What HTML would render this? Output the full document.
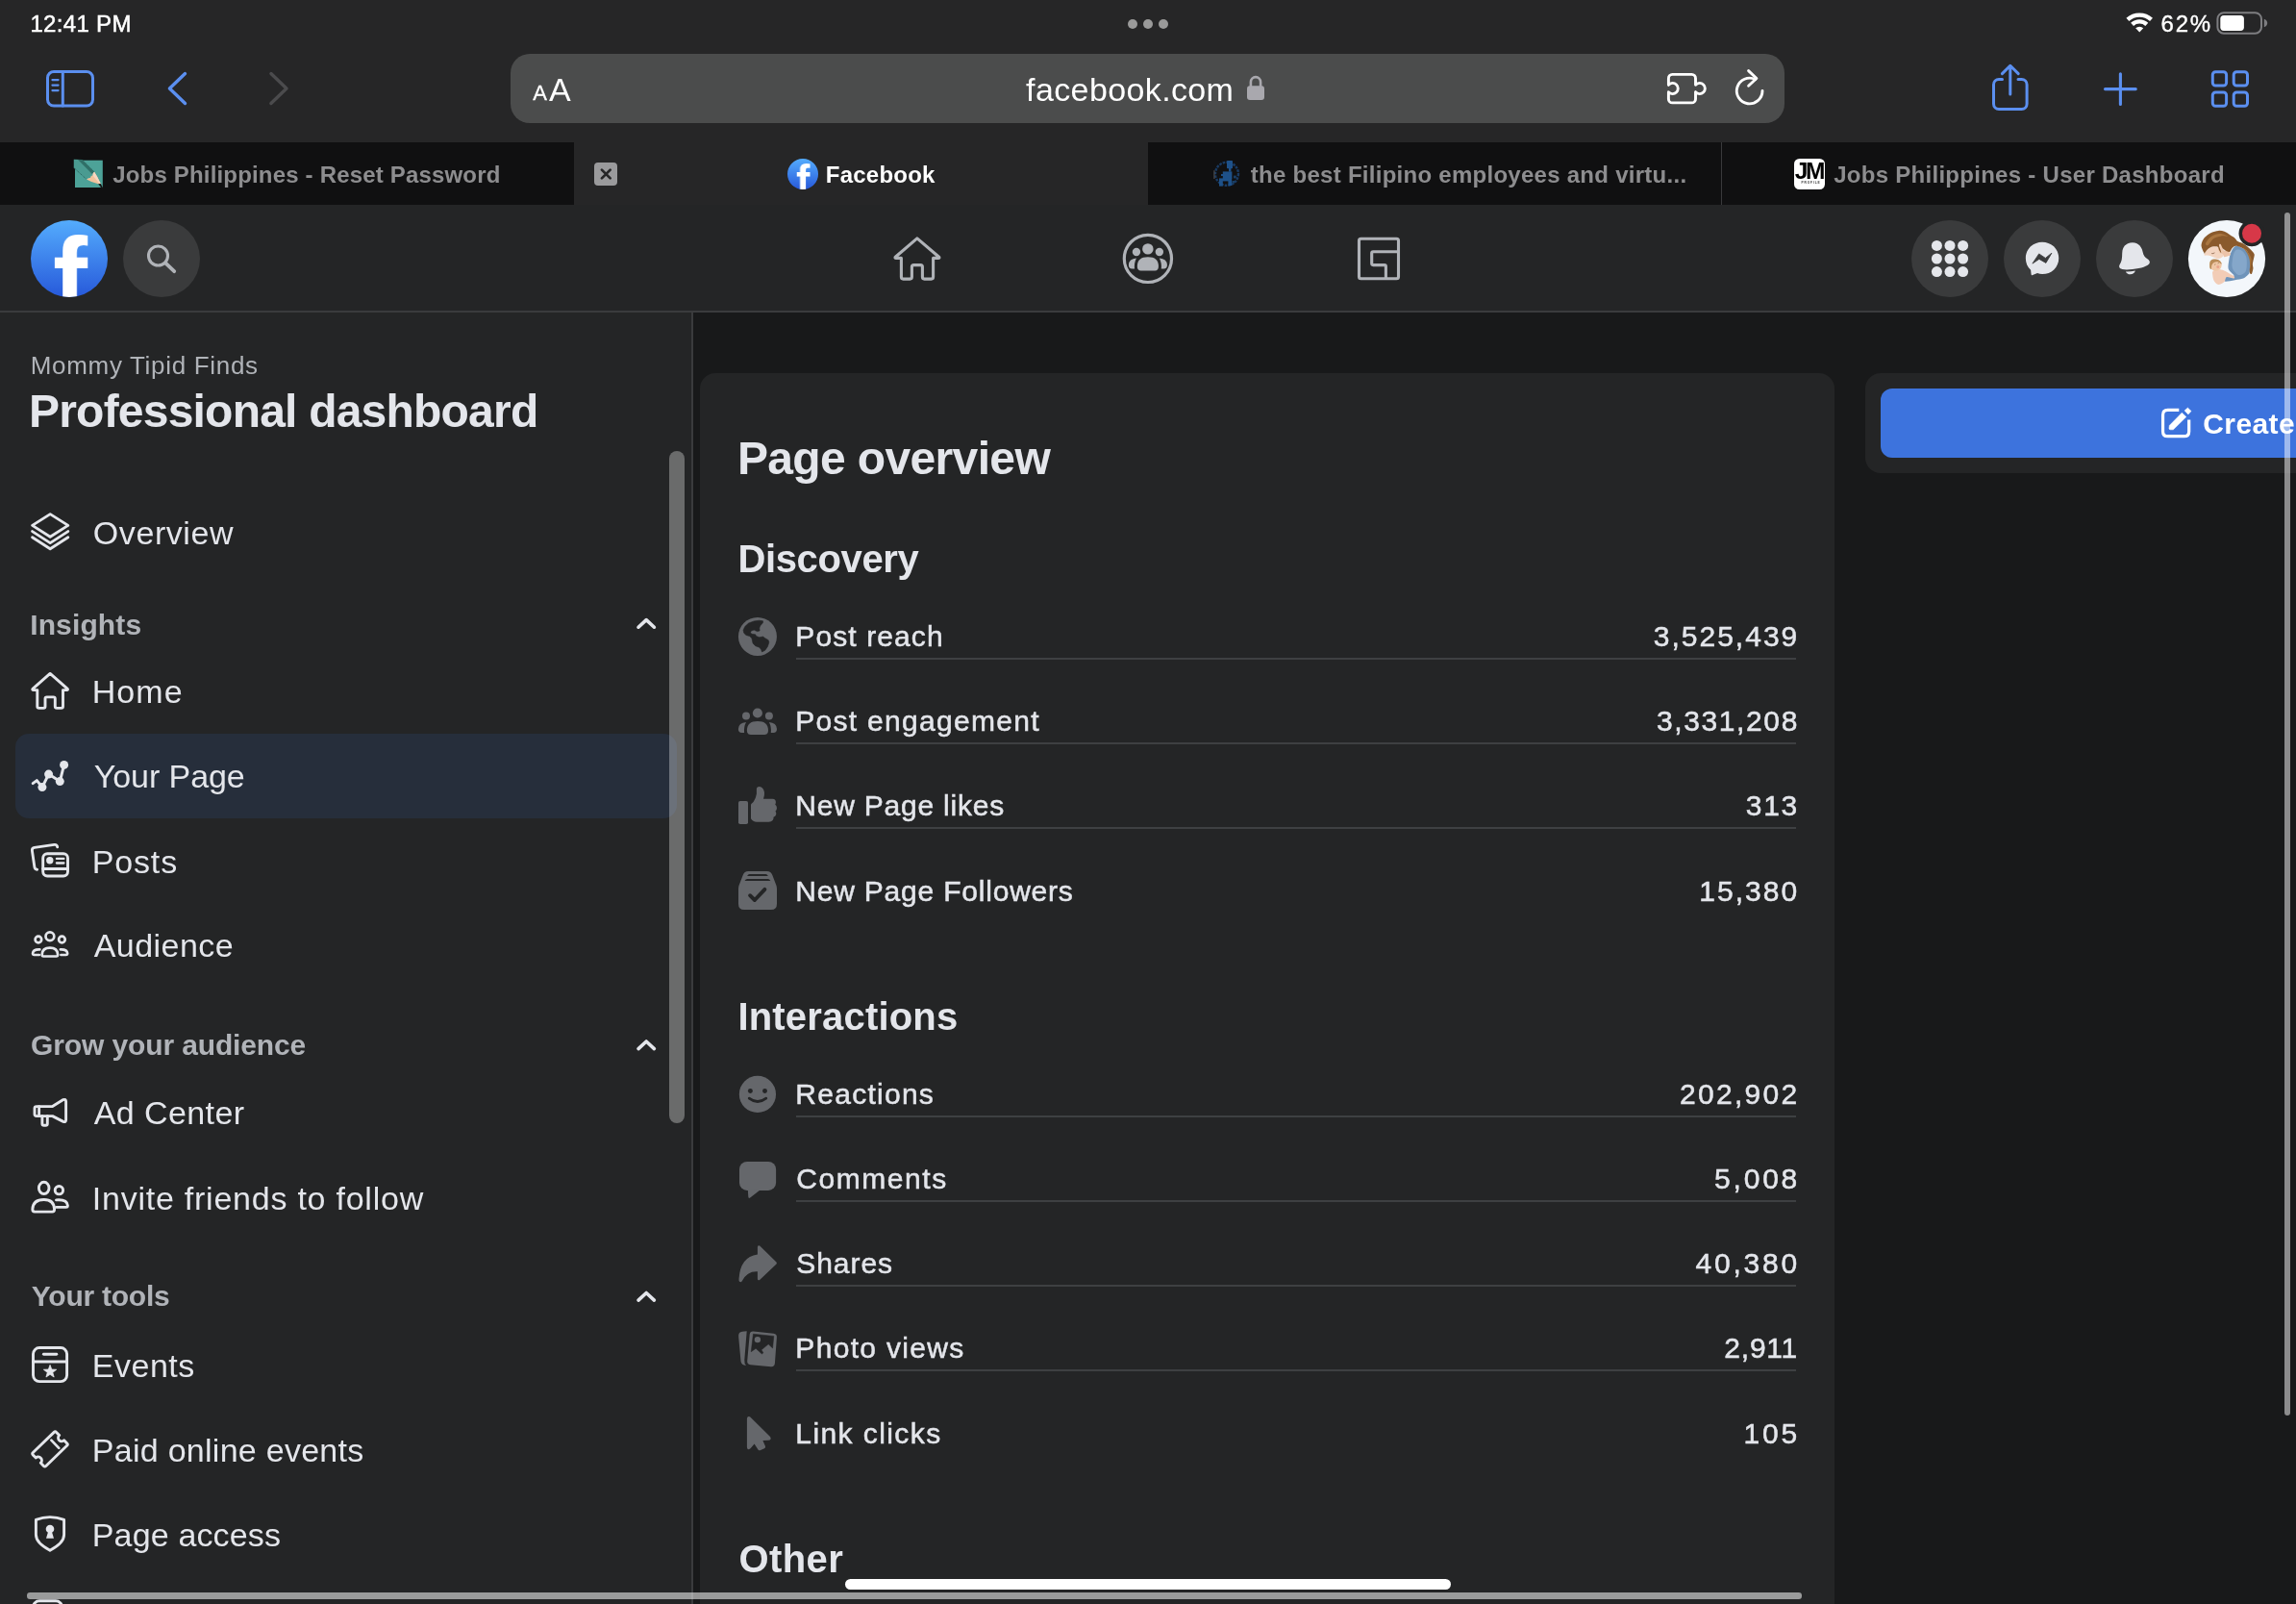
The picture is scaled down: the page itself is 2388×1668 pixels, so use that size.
<!DOCTYPE html>
<html lang="en"><head><meta charset="utf-8"><title>Facebook</title>
<style>
html,body{margin:0;padding:0;background:#18191a}
body{width:2388px;height:1668px;position:relative;font-family:"Liberation Sans",Arial,sans-serif;}
.b{position:absolute;display:block}
.t{position:absolute;white-space:nowrap;margin:0}
svg{overflow:visible}
#root{position:absolute;left:0;top:0;width:2388px;height:1668px;overflow:hidden;will-change:transform}
</style></head><body><div id="root">
<div class="b" style="left:0px;top:0px;width:2388px;height:148px;background:#262627;"></div>
<div class="b" style="left:0px;top:148px;width:2388px;height:65px;background:#101011;"></div>
<div class="b" style="left:597px;top:148px;width:597px;height:65px;background:#262627;"></div>
<div class="b" style="left:1790px;top:148px;width:1px;height:65px;background:#3a3a3c;"></div>
<div class="b" style="left:531px;top:56px;width:1325px;height:71.5px;background:#4b4c4c;border-radius:20px;"></div>
<div class="t" style="top:10.2px;font-size:24px;line-height:29px;color:#fff;letter-spacing:0.33px;-webkit-text-stroke:0.5px #fff;left:31.4px;">12:41 PM</div>
<div class="t" style="top:10.0px;font-size:24px;line-height:29px;color:#fff;letter-spacing:1.69px;-webkit-text-stroke:0.4px #fff;left:2247.6px;">62%</div>
<div class="t" style="top:84.2px;font-size:22px;line-height:26px;color:#fff;-webkit-text-stroke:0.3px #fff;left:554.2px;">A</div>
<div class="t" style="top:72.5px;font-size:34px;line-height:41px;color:#fff;left:571.1px;">A</div>
<div class="t" style="top:72.5px;font-size:34px;line-height:41px;color:#fff;letter-spacing:0.38px;left:1067.1px;">facebook.com</div>
<div class="t" style="top:167.0px;font-size:24px;line-height:29px;color:#8d8d8f;font-weight:700;letter-spacing:0.18px;left:117.2px;">Jobs Philippines - Reset Password</div>
<div class="t" style="top:167.0px;font-size:24px;line-height:29px;color:#fff;font-weight:700;letter-spacing:0.23px;left:858.8px;">Facebook</div>
<div class="t" style="top:167.0px;font-size:24px;line-height:29px;color:#8d8d8f;font-weight:700;letter-spacing:0.27px;left:1300.8px;">the best Filipino employees and virtu...</div>
<div class="t" style="top:167.0px;font-size:24px;line-height:29px;color:#8d8d8f;font-weight:700;letter-spacing:0.28px;left:1907.2px;">Jobs Philippines - User Dashboard</div>
<div class="b" style="left:0px;top:213px;width:2388px;height:112px;background:#242526;"></div>
<div class="b" style="left:0px;top:323px;width:2388px;height:2px;background:#3a3b3d;"></div>
<div class="b" style="left:0px;top:325px;width:719px;height:1343px;background:#242526;"></div>
<div class="b" style="left:719px;top:325px;width:2px;height:1343px;background:#3a3b3d;"></div>
<div class="t" style="top:364.9px;font-size:26px;line-height:31px;color:#b0b3b8;letter-spacing:0.69px;left:31.7px;">Mommy Tipid Finds</div>
<div class="t" style="top:398.6px;font-size:48px;line-height:58px;color:#e4e6eb;font-weight:700;letter-spacing:-0.79px;left:30.0px;">Professional dashboard</div>
<div class="b" style="left:16px;top:762.5px;width:688px;height:88px;background:#262e3b;border-radius:14px;"></div>
<div class="t" style="top:534.0px;font-size:34px;line-height:41px;color:#e4e6eb;letter-spacing:0.58px;left:96.8px;">Overview</div>
<div class="t" style="top:698.7px;font-size:34px;line-height:41px;color:#e4e6eb;letter-spacing:1.02px;left:95.8px;">Home</div>
<div class="t" style="top:787.3px;font-size:34px;line-height:41px;color:#e4e6eb;letter-spacing:-0.06px;left:97.7px;">Your Page</div>
<div class="t" style="top:875.5px;font-size:34px;line-height:41px;color:#e4e6eb;letter-spacing:0.83px;left:95.8px;">Posts</div>
<div class="t" style="top:963.2px;font-size:34px;line-height:41px;color:#e4e6eb;letter-spacing:0.46px;left:97.7px;">Audience</div>
<div class="t" style="top:1137.1px;font-size:34px;line-height:41px;color:#e4e6eb;letter-spacing:0.41px;left:97.7px;">Ad Center</div>
<div class="t" style="top:1225.7px;font-size:34px;line-height:41px;color:#e4e6eb;letter-spacing:0.76px;left:95.8px;">Invite friends to follow</div>
<div class="t" style="top:1399.5px;font-size:34px;line-height:41px;color:#e4e6eb;letter-spacing:0.50px;left:95.8px;">Events</div>
<div class="t" style="top:1487.5px;font-size:34px;line-height:41px;color:#e4e6eb;letter-spacing:0.27px;left:95.8px;">Paid online events</div>
<div class="t" style="top:1575.5px;font-size:34px;line-height:41px;color:#e4e6eb;letter-spacing:0.15px;left:95.8px;">Page access</div>
<div class="t" style="top:632.0px;font-size:30px;line-height:36px;color:#b0b3b8;font-weight:700;letter-spacing:0.13px;left:31.2px;">Insights</div>
<div class="t" style="top:1069.4px;font-size:30px;line-height:36px;color:#b0b3b8;font-weight:700;letter-spacing:-0.13px;left:32.1px;">Grow your audience</div>
<div class="t" style="top:1330.4px;font-size:30px;line-height:36px;color:#b0b3b8;font-weight:700;letter-spacing:-0.25px;left:32.8px;">Your tools</div>
<div class="b" style="left:696px;top:469px;width:16px;height:699px;background:rgba(255,255,255,0.32);border-radius:8px;"></div>
<div class="b" style="left:728px;top:388px;width:1180px;height:1400px;background:#242526;border-radius:16px;"></div>
<div class="t" style="top:447.7px;font-size:48px;line-height:58px;color:#e4e6eb;font-weight:700;letter-spacing:-0.64px;left:766.9px;">Page overview</div>
<div class="t" style="top:557.3px;font-size:40px;line-height:48px;color:#e4e6eb;font-weight:700;letter-spacing:-0.36px;left:767.4px;">Discovery</div>
<div class="t" style="top:1032.9px;font-size:40px;line-height:48px;color:#e4e6eb;font-weight:700;letter-spacing:0.19px;left:767.4px;">Interactions</div>
<div class="t" style="top:1596.9px;font-size:40px;line-height:48px;color:#e4e6eb;font-weight:700;letter-spacing:0.38px;left:768.6px;">Other</div>
<div class="t" style="top:644.1px;font-size:30px;line-height:36px;color:#e4e6eb;letter-spacing:1.10px;-webkit-text-stroke:0.5px #e4e6eb;left:827.3px;">Post reach</div>
<div class="t" style="top:644.1px;font-size:30px;line-height:36px;color:#e4e6eb;letter-spacing:2.00px;-webkit-text-stroke:0.5px #e4e6eb;left:1719.8px;">3,525,439</div>
<div class="b" style="left:828px;top:684px;width:1039.5px;height:2px;background:#3e4042;"></div>
<div class="t" style="top:732.2px;font-size:30px;line-height:36px;color:#e4e6eb;letter-spacing:1.29px;-webkit-text-stroke:0.5px #e4e6eb;left:827.3px;">Post engagement</div>
<div class="t" style="top:732.2px;font-size:30px;line-height:36px;color:#e4e6eb;letter-spacing:1.62px;-webkit-text-stroke:0.5px #e4e6eb;left:1722.9px;">3,331,208</div>
<div class="b" style="left:828px;top:772px;width:1039.5px;height:2px;background:#3e4042;"></div>
<div class="t" style="top:820.3px;font-size:30px;line-height:36px;color:#e4e6eb;letter-spacing:0.78px;-webkit-text-stroke:0.5px #e4e6eb;left:827.3px;">New Page likes</div>
<div class="t" style="top:820.3px;font-size:30px;line-height:36px;color:#e4e6eb;letter-spacing:1.77px;-webkit-text-stroke:0.5px #e4e6eb;left:1815.7px;">313</div>
<div class="b" style="left:828px;top:860px;width:1039.5px;height:2px;background:#3e4042;"></div>
<div class="t" style="top:908.6px;font-size:30px;line-height:36px;color:#e4e6eb;letter-spacing:0.79px;-webkit-text-stroke:0.5px #e4e6eb;left:827.3px;">New Page Followers</div>
<div class="t" style="top:908.6px;font-size:30px;line-height:36px;color:#e4e6eb;letter-spacing:2.05px;-webkit-text-stroke:0.5px #e4e6eb;left:1767.2px;">15,380</div>
<div class="t" style="top:1120.0px;font-size:30px;line-height:36px;color:#e4e6eb;letter-spacing:1.27px;-webkit-text-stroke:0.5px #e4e6eb;left:827.3px;">Reactions</div>
<div class="t" style="top:1120.0px;font-size:30px;line-height:36px;color:#e4e6eb;letter-spacing:2.32px;-webkit-text-stroke:0.5px #e4e6eb;left:1746.9px;">202,902</div>
<div class="b" style="left:828px;top:1160px;width:1039.5px;height:2px;background:#3e4042;"></div>
<div class="t" style="top:1208.4px;font-size:30px;line-height:36px;color:#e4e6eb;letter-spacing:1.57px;-webkit-text-stroke:0.5px #e4e6eb;left:828.2px;">Comments</div>
<div class="t" style="top:1208.4px;font-size:30px;line-height:36px;color:#e4e6eb;letter-spacing:2.78px;-webkit-text-stroke:0.5px #e4e6eb;left:1783.1px;">5,008</div>
<div class="b" style="left:828px;top:1248px;width:1039.5px;height:2px;background:#3e4042;"></div>
<div class="t" style="top:1296.4px;font-size:30px;line-height:36px;color:#e4e6eb;letter-spacing:0.97px;-webkit-text-stroke:0.5px #e4e6eb;left:828.2px;">Shares</div>
<div class="t" style="top:1296.4px;font-size:30px;line-height:36px;color:#e4e6eb;letter-spacing:2.83px;-webkit-text-stroke:0.5px #e4e6eb;left:1763.4px;">40,380</div>
<div class="b" style="left:828px;top:1336px;width:1039.5px;height:2px;background:#3e4042;"></div>
<div class="t" style="top:1384.4px;font-size:30px;line-height:36px;color:#e4e6eb;letter-spacing:1.32px;-webkit-text-stroke:0.5px #e4e6eb;left:827.3px;">Photo views</div>
<div class="t" style="top:1384.4px;font-size:30px;line-height:36px;color:#e4e6eb;letter-spacing:0.79px;-webkit-text-stroke:0.5px #e4e6eb;left:1793.3px;">2,911</div>
<div class="b" style="left:828px;top:1424px;width:1039.5px;height:2px;background:#3e4042;"></div>
<div class="t" style="top:1473.1px;font-size:30px;line-height:36px;color:#e4e6eb;letter-spacing:1.42px;-webkit-text-stroke:0.5px #e4e6eb;left:827.3px;">Link clicks</div>
<div class="t" style="top:1473.1px;font-size:30px;line-height:36px;color:#e4e6eb;letter-spacing:2.87px;-webkit-text-stroke:0.5px #e4e6eb;left:1813.5px;">105</div>
<div class="b" style="left:1940px;top:388px;width:500px;height:104px;background:#242526;border-radius:16px;"></div>
<div class="b" style="left:1956px;top:404px;width:500px;height:72px;background:#3d73dd;border-radius:12px;"></div>
<div class="t" style="top:423.1px;font-size:30px;line-height:36px;color:#fff;font-weight:700;letter-spacing:0.40px;left:2291.3px;">Create</div>
<svg class="b" style="left:0;top:0" width="2388" height="1668" viewBox="0 0 2388 1668"><g fill="none" stroke="#5b8ff0" stroke-linecap="round" stroke-linejoin="round"><rect x="49.5" y="74.5" width="47" height="35.6" rx="6.5" stroke-width="3"/><path d="M65.3,74.5V110" stroke-width="3"/><path d="M54.4,83.1H60.6M54.4,88.6H60.6M54.4,94.1H60.6" stroke-width="2.1"/><path d="M192.5,76.6L176.4,92L192.5,107.5" stroke-width="3.4"/><path d="M281.9,76.6L298,92L281.9,107.5" stroke="#4b4b4d" stroke-width="3.4"/><path d="M2082.5,82.5H2079a5.5,5.5 0 0 0 -5.5,5.5V108a5.5,5.5 0 0 0 5.5,5.5H2102.6a5.5,5.5 0 0 0 5.5,-5.5V88a5.5,5.5 0 0 0 -5.5,-5.5H2099" stroke-width="3"/><path d="M2090.8,98V68.6M2082.4,76.6L2090.8,68.3L2099.2,76.6" stroke-width="3"/><path d="M2189.5,92.6H2221.3M2205.4,76.8V108.5" stroke-width="3.1"/><rect x="2301.3" y="74.7" width="14.3" height="14.3" rx="3" stroke-width="3"/><rect x="2323.2" y="74.7" width="14.3" height="14.3" rx="3" stroke-width="3"/><rect x="2301.3" y="96" width="14.3" height="14.3" rx="3" stroke-width="3"/><rect x="2323.2" y="96" width="14.3" height="14.3" rx="3" stroke-width="3"/></g><g fill="none" stroke="#ffffff" stroke-width="2.9" stroke-linecap="round" stroke-linejoin="round"><path d="M1739.4,77.4H1759.5a4,4 0 0 1 4,4V88.35a5.6,5.6 0 1 1 0,7.3V102.9a4,4 0 0 1 -4,4H1739.4a4,4 0 0 1 -4,-4V95.65a5.6,5.6 0 1 0 0,-7.3V81.4a4,4 0 0 1 4,-4Z"/><path d="M1833,94.55A13.35,13.35 0 1 1 1825.6,82.6"/><path d="M1818.6,73.6L1826.9,81.5L1818.6,89.3"/></g><rect x="1297" y="89.3" width="18" height="14.7" rx="3" fill="#a9a8ae"/><path d="M1300.9,90.5V85.2a5.1,5.1 0 0 1 10.2,0V90.5" fill="none" stroke="#a9a8ae" stroke-width="2.6"/><g fill="none" stroke="#ffffff" stroke-width="4.3"><path d="M2212.9,20.4A18,18 0 0 1 2237.5,20.4"/><path d="M2217.6,25.4A11.2,11.2 0 0 1 2232.8,25.4"/></g><path d="M2225.2,33.6L2221.2,29.3A5.9,5.9 0 0 1 2229.2,29.3Z" fill="#ffffff"/><rect x="2306.4" y="13.2" width="45.6" height="21.5" rx="6.5" fill="none" stroke="#7d7d80" stroke-width="2"/><rect x="2309.3" y="16.1" width="24.6" height="15.8" rx="3.6" fill="#fff"/><path d="M2354.8,19.8c2.4,0.8 3.4,2.4 3.4,4.2s-1,3.4-3.4,4.2Z" fill="#7d7d80"/><circle cx="1178" cy="25" r="5" fill="#9a9a9a"/><circle cx="1194" cy="25" r="5" fill="#9a9a9a"/><circle cx="1210" cy="25" r="5" fill="#9a9a9a"/><rect x="618" y="169" width="24" height="24" rx="4" fill="#9a9a9c"/><path d="M625.9,176.6L634.7,185.4M634.7,176.6L625.9,185.4" stroke="#262627" stroke-width="2.7" stroke-linecap="round"/><rect x="78" y="166.7" width="28.8" height="28.3" fill="#4da298"/><path d="M76.75,165.7L85.3,166L98.1,178.8L90,186.5L76.75,174.4Z" fill="#4a9b91"/><path d="M81,166L85.3,166L98.1,178.8L95.9,180.9Z" fill="#2f6f67"/><path d="M76.75,174.4L90,186.5" stroke="#2a5f59" stroke-width="0.9" stroke-dasharray="1.2 0.8" fill="none"/><path d="M85.3,166L98.1,178.8" stroke="#2a5f59" stroke-width="0.7" stroke-dasharray="1.2 0.8" fill="none"/><path d="M98.1,178.8Q101.6,184 104.7,190.9L102.2,191.3Q95,189.6 90,186.5Q92,184.5 94,185Q94.5,182.5 96.5,182.6Q96.3,180 98.1,178.8Z" fill="#f0c29c"/><path d="M98.1,178.8Q101.6,184 104.7,190.9L103.4,191.1Q99.5,186 96.5,182.6Q96.3,180 98.1,178.8Z" fill="#f8d6c0"/><path d="M102.2,191.3L104.7,190.9L107.7,196.5L106.6,196.9Z" fill="#151515"/><circle cx="1276" cy="180.8" r="12" fill="none" stroke="#193a62" stroke-width="2.4" stroke-dasharray="2.6 1.1"/><g fill="#1e5189"><rect x="1276" y="167" width="6" height="8.2" rx="0.8"/><rect x="1278" y="175" width="2.4" height="3.6"/><rect x="1271.8" y="178.4" width="9.6" height="7.6"/><rect x="1270" y="181" width="2" height="2"/><rect x="1268" y="185.4" width="12" height="3"/><rect x="1268" y="188" width="3.8" height="5.6"/><rect x="1277.4" y="186" width="3.8" height="7"/></g><rect x="1283" y="182.6" width="2.8" height="2.8" fill="#1a3f66"/><rect x="1281.5" y="188" width="2.6" height="2.6" fill="#1a3f66"/><rect x="1262.3" y="177.2" width="1.2" height="8.8" fill="#4a4a4c"/><rect x="1866" y="165" width="32" height="32" rx="5.5" fill="#fff"/><circle cx="168" cy="269" r="40" fill="#3a3b3c"/><circle cx="2028" cy="269" r="40" fill="#3a3b3c"/><circle cx="2124" cy="269" r="40" fill="#3a3b3c"/><circle cx="2220" cy="269" r="40" fill="#3a3b3c"/><circle cx="164.5" cy="266" r="10" fill="none" stroke="#b0b3b8" stroke-width="3.1"/><path d="M172,273.3L181.2,282.2" stroke="#b0b3b8" stroke-width="3.8" stroke-linecap="round"/><path transform="translate(914,229)" d="M39.9,18.9L17.3,38.2Q16.5,39.4 18,39.4H23.4V59.1Q23.4,61.1 25.4,61.1H32.4Q34.4,61.1 34.4,59.1V48.6Q34.4,46.6 36.4,46.6H43.4Q45.4,46.6 45.4,48.6V59.1Q45.4,61.1 47.4,61.1H54.6Q56.6,61.1 56.6,59.1V39.4H61.9Q63.4,39.4 62.6,38.2Z" fill="none" stroke="#b0b3b8" stroke-width="3.1" stroke-linejoin="round"/><circle cx="1193.9" cy="268.9" r="24.6" fill="none" stroke="#b0b3b8" stroke-width="3.2"/><g transform="translate(1163.95,237.4)" fill="#b0b3b8"><circle cx="29.9" cy="21.5" r="5.7"/><circle cx="18" cy="24.6" r="4.2"/><circle cx="41.9" cy="24.6" r="4.2"/><path d="M22.7,44Q18.9,44 18.9,39.6Q18.9,29.9 29.95,29.9Q41,29.9 41,39.6Q41,44 37.2,44Z"/><path d="M18,31Q10.2,31.6 9.9,38Q9.9,42 13.6,42H16.1Q15.4,36 18,31Z"/><path d="M41.9,31Q49.7,31.6 50,38Q50,42 46.3,42H43.8Q44.5,36 41.9,31Z"/></g><g transform="translate(1394,229)" fill="none" stroke="#b0b3b8" stroke-width="3.1" stroke-linejoin="round"><rect x="19.5" y="19.3" width="41" height="41.4" rx="2"/><path d="M60.5,32.7H34.2Q32.7,32.7 32.7,34.2V45.1Q32.7,46.6 34.2,46.6H45.9Q47.4,46.6 47.4,48.1V60.7"/></g><circle cx="2014.4" cy="255.4" r="5.5" fill="#e4e6eb"/><circle cx="2028" cy="255.4" r="5.5" fill="#e4e6eb"/><circle cx="2041.6" cy="255.4" r="5.5" fill="#e4e6eb"/><circle cx="2014.4" cy="269" r="5.5" fill="#e4e6eb"/><circle cx="2028" cy="269" r="5.5" fill="#e4e6eb"/><circle cx="2041.6" cy="269" r="5.5" fill="#e4e6eb"/><circle cx="2014.4" cy="282.6" r="5.5" fill="#e4e6eb"/><circle cx="2028" cy="282.6" r="5.5" fill="#e4e6eb"/><circle cx="2041.6" cy="282.6" r="5.5" fill="#e4e6eb"/><g transform="translate(2084,229)"><path d="M40.05,22.7C30.4,22.7 22.85,29.9 22.85,39.4C22.85,44.4 24.8,48.7 28.1,51.8L28.6,56.2Q28.8,57.6 30.1,57L35,55Q37.4,56.1 40.05,56.1C49.7,56.1 57.25,48.9 57.25,39.4C57.25,29.9 49.7,22.7 40.05,22.7Z" fill="#e4e6eb"/><path d="M29.9,45.1L36.7,34.9L43.4,39.4L49.9,34.2L43.9,44.4L36.9,40.4Z" fill="#3a3b3c" stroke="#3a3b3c" stroke-width="0.8" stroke-linejoin="round"/></g><g transform="translate(2180,229)" fill="#e4e6eb"><path d="M27.2,34.4C27.2,27 32,23.2 37.9,23.2C44,23.2 47.5,27.5 48.6,33C49.3,37 51,38.5 53.5,40.2C56,41.8 56.3,43.5 55.4,45.2C54,47.5 47,50 38,51C31,51.8 26.5,51.3 25,50C23.6,48.8 24,47 25,45.4C26.5,43 27.2,40 27.2,34.4Z"/><path d="M30.9,53.4Q36,53.5 40.9,52.4Q39.5,56.2 35.7,56.2Q32.2,56.2 30.9,53.4Z"/></g><clipPath id="avc"><circle cx="46" cy="46" r="40"/></clipPath><g transform="translate(2270,223)"><circle cx="46" cy="46" r="40.1" fill="#f3f7fb"/><g clip-path="url(#avc)"><path d="M55.1,33.0C56.4,32.5 57.9,33.1 59.7,33.8C61.5,34.6 64.3,35.7 66.0,37.3C67.7,38.9 69.0,41.2 69.7,43.6C70.4,46.0 70.3,49.0 70.3,51.6C70.3,54.3 70.0,57.9 69.7,59.7C69.4,61.5 69.4,61.4 68.3,62.5C67.2,63.7 65.4,65.6 63.1,66.6C60.8,67.5 57.6,67.7 54.5,68.3C51.4,68.8 46.5,69.9 44.8,69.8C43.0,69.7 43.9,68.5 44.1,67.7C44.3,66.9 44.3,65.5 45.9,64.8C47.4,64.2 52.6,64.4 53.4,63.7C54.1,62.9 51.4,61.5 50.5,60.2C49.5,59.0 48.0,58.1 47.6,56.2C47.2,54.3 47.8,51.1 48.1,48.8C48.4,46.5 48.7,44.5 49.3,42.5C49.9,40.4 50.7,38.3 51.6,36.7C52.6,35.1 53.7,33.5 55.1,33.0Z" fill="#6f94ba"/><path d="M56.2,36.7C57.7,36.3 60.3,36.7 62.0,37.9C63.6,39.0 65.2,41.3 66.0,43.6C66.8,45.9 66.9,49.0 66.8,51.6C66.7,54.3 66.6,57.8 65.4,59.7C64.2,61.6 61.4,62.9 59.7,63.1C57.9,63.3 56.4,62.2 55.1,60.8C53.7,59.5 52.2,57.4 51.6,55.1C51.1,52.8 51.6,49.5 51.9,47.0C52.2,44.6 52.6,41.9 53.4,40.2C54.1,38.4 54.8,37.1 56.2,36.7Z" fill="#85a7ca"/><path d="M42.2,37.3C43.6,37.1 47.6,38.2 48.8,39.0C50.0,39.8 50.3,41.3 49.5,42.2C48.6,43.0 44.8,44.2 43.6,44.3C42.5,44.4 43.1,43.4 42.6,42.7C42.0,42.1 40.2,41.1 40.2,40.2C40.1,39.3 40.7,37.5 42.2,37.3Z" fill="#ecc3a8"/><path d="M23.2,40.2C23.9,39.0 25.5,36.7 27.0,35.6C28.4,34.4 30.5,33.6 32.1,33.3C33.8,33.0 35.7,33.2 36.7,33.8C37.7,34.5 37.6,36.2 38.2,37.3C38.7,38.3 39.4,39.3 40.2,40.2C40.9,41.0 42.7,41.6 42.7,42.5C42.7,43.3 41.2,44.4 40.2,45.0C39.2,45.6 37.7,46.0 36.7,46.0C35.8,46.1 35.4,45.7 34.4,45.3C33.5,45.0 32.3,44.3 31.0,43.9C29.6,43.4 27.7,42.8 26.4,42.6C25.0,42.4 23.4,43.0 22.8,42.6C22.3,42.2 22.5,41.3 23.2,40.2Z" fill="#f3d5c1"/><ellipse cx="39.9" cy="35.2" rx="2.8" ry="5.2" fill="#efc9ae"/><path d="M22.7,40.4C22.0,39.2 19.5,34.9 19.5,32.1C19.6,29.4 21.2,26.3 22.9,24.1C24.7,21.9 27.4,20.1 29.8,18.9C32.2,17.7 35.0,17.1 37.3,16.9C39.6,16.7 41.6,17.1 43.6,17.8C45.6,18.5 47.5,20.1 49.3,21.2C51.2,22.4 53.2,23.5 54.5,24.7C55.8,25.8 56.1,27.3 57.4,28.1C58.6,29.0 60.4,29.1 62.0,29.8C63.5,30.6 65.0,31.6 66.6,32.7C68.1,33.8 69.8,35.3 71.1,36.7C72.5,38.2 74.1,39.8 74.6,41.3C75.1,42.8 74.3,44.2 74.0,45.9C73.7,47.6 73.0,49.9 72.9,51.6C72.8,53.4 73.6,54.5 73.4,56.2C73.2,57.9 72.3,61.4 71.7,62.0C71.1,62.5 69.9,61.4 69.7,59.7C69.5,57.9 70.3,54.3 70.3,51.6C70.3,49.0 70.4,46.0 69.7,43.6C69.0,41.2 67.7,38.9 66.0,37.3C64.3,35.7 61.5,34.6 59.7,33.8C57.9,33.1 56.4,32.5 55.1,32.7C53.7,32.9 52.7,33.9 51.6,35.0C50.6,36.0 50.1,38.7 48.8,39.0C47.4,39.3 44.8,37.5 43.6,36.7C42.4,36.0 42.0,35.4 41.3,34.4C40.6,33.5 40.2,31.4 39.6,31.0C39.0,30.6 37.9,31.1 37.9,32.1C37.9,33.2 39.2,36.0 39.6,37.3C40.0,38.6 40.4,40.3 40.2,40.2C39.9,40.1 38.4,37.8 37.9,36.7C37.3,35.7 37.7,34.4 36.7,33.8C35.8,33.3 33.8,33.0 32.1,33.3C30.5,33.6 28.4,34.5 27.0,35.6C25.5,36.6 24.2,38.8 23.5,39.6C22.8,40.4 23.3,41.7 22.7,40.4Z" fill="#8a5a2c"/><path d="M24.1,29.8C24.7,28.3 27.3,24.6 29.8,22.9C32.3,21.3 36.1,20.1 39.0,20.1C41.9,20.1 46.9,22.6 47.0,22.9C47.2,23.3 42.6,22.0 40.2,22.4C37.7,22.8 34.4,23.6 32.1,25.2C29.8,26.9 27.7,31.4 26.4,32.1C25.1,32.9 23.5,31.4 24.1,29.8Z" fill="#a97640"/><path d="M63.1,34.4C63.4,34.4 67.4,38.1 68.8,40.2C70.3,42.3 71.4,44.7 71.7,47.0C72.1,49.4 70.8,52.4 70.9,54.5C70.9,56.6 72.1,59.6 72.0,59.7C71.9,59.8 70.7,57.2 70.3,55.1C69.9,53.0 70.2,49.5 69.7,47.0C69.2,44.6 68.2,42.3 67.1,40.2C66.0,38.1 62.8,34.4 63.1,34.4Z" fill="#a3703a"/><path d="M30.2,40.6Q32,41 33.4,39.8" stroke="#7a5236" stroke-width="0.7" fill="none"/><path d="M32.1,58.5C33.6,57.6 37.9,57.2 40.2,57.4C42.5,57.6 44.2,58.8 45.9,59.7C47.6,60.5 49.2,61.8 50.5,62.5C51.8,63.3 53.2,63.6 53.6,64.3C54.1,64.9 54.6,66.4 53.4,66.6C52.1,66.7 47.4,64.9 45.9,65.1C44.4,65.3 44.7,66.9 44.3,67.7C43.9,68.5 44.8,68.9 43.7,69.8C42.6,70.7 39.7,73.0 37.9,73.0C36.1,72.9 34.1,71.1 33.0,69.4C31.9,67.8 31.4,64.9 31.3,63.1C31.1,61.3 30.6,59.5 32.1,58.5Z" fill="#f2ccb6"/><circle cx="34.5" cy="52.6" r="6.2" fill="#f0c8a6"/><path d="M28.2,53.4C28.3,52.2 28.0,49.9 28.7,48.8C29.3,47.6 30.8,46.9 32.1,46.6C33.5,46.3 35.4,46.5 36.7,47.0C38.1,47.6 39.5,49.1 40.2,49.9C40.8,50.7 41.0,51.7 40.4,51.6C39.9,51.5 38.0,49.6 36.7,49.3C35.4,49.1 33.8,49.3 32.7,49.9C31.7,50.5 30.9,51.6 30.4,52.8C29.9,53.9 30.1,56.3 29.8,56.8C29.5,57.3 28.8,56.5 28.5,55.9C28.2,55.4 28.2,54.6 28.2,53.4Z" fill="#b98c58"/><circle cx="36.8" cy="54.4" r="1.5" fill="#eaa48c"/><path d="M33.2,52.2l1.2,-0.4M36.6,51l1.1,-0.5" stroke="#7a5236" stroke-width="0.6"/></g></g><circle cx="2342" cy="242.8" r="13.5" fill="#242526"/><circle cx="2342" cy="242.8" r="10" fill="#d73848"/><g fill="none" stroke="#e4e6eb" stroke-width="2.9" stroke-linecap="round" stroke-linejoin="round"><path d="M52.2,534.6L70.8,546.4L52.2,558.2L33.6,546.4Z"/><path d="M33.6,552.6L52.2,564.6L70.8,552.6"/><path d="M33.6,558.8L52.2,570.8L70.8,558.8"/></g><g fill="none" stroke="#e4e6eb" stroke-width="2.9" stroke-linecap="round" stroke-linejoin="round"><path d="M52.1,700.4L34,716.4Q33.2,717.6 34.8,717.6H38.8V734.6Q38.8,736.4 40.6,736.4H45.2Q47,736.4 47,734.6V726.6Q47,724.9 48.7,724.9H55.6Q57.3,724.9 57.3,726.6V734.6Q57.3,736.4 59.1,736.4H63.7Q65.5,736.4 65.5,734.6V717.6H69.5Q71,717.6 70.3,716.4Z"/></g><path d="M34.2,814.6L38.3,811.6L43.9,818.6L50.6,805.1L62.3,812.6L66.6,795.4" fill="none" stroke="#e4e6eb" stroke-width="3" stroke-linecap="round" stroke-linejoin="round"/><circle cx="43.9" cy="818.6" r="4.5" fill="#e4e6eb"/><circle cx="50.6" cy="805.1" r="4.5" fill="#e4e6eb"/><circle cx="62.3" cy="812.6" r="4.5" fill="#e4e6eb"/><circle cx="66.6" cy="795.4" r="4.5" fill="#e4e6eb"/><g fill="none" stroke="#e4e6eb" stroke-width="2.9" stroke-linecap="round" stroke-linejoin="round"><path d="M38.6,904.2Q36.2,904 35.9,901.6L33.4,884.6Q33,881.8 35.8,881.4L56.4,878.4Q59.2,878 59.7,880.8"/><rect x="44.7" y="887.8" width="25.8" height="23.2" rx="4.5"/><path d="M44.7,903.5H70.5"/></g><circle cx="51.8" cy="894.8" r="3.7" fill="#e4e6eb"/><path d="M58.9,892.9H66.4M58.9,897.5H66.4" stroke="#e4e6eb" stroke-width="2.3" stroke-linecap="round"/><g fill="none" stroke="#e4e6eb" stroke-width="2.7" stroke-linecap="round" stroke-linejoin="round"><circle cx="51.9" cy="973.7" r="4.4"/><circle cx="39.9" cy="977" r="3.3"/><circle cx="64.4" cy="977" r="3.3"/><path d="M45.2,994.5Q43.7,994.5 43.7,992.6Q44,985.6 51.9,985.6Q59.8,985.6 60.1,992.6Q60.1,994.5 58.6,994.5Z"/><path d="M41.4,987.3Q34.4,987 34.05,991.4Q34,993 35.6,993H40.8"/><path d="M62.8,987.3Q69.8,987 70.15,991.4Q70.2,993 68.6,993H63.4"/></g><g fill="none" stroke="#e4e6eb" stroke-width="2.9" stroke-linecap="round" stroke-linejoin="round"><path d="M38,1150.6H54.6L65.8,1143.6Q68.4,1142.6 68.6,1145.4V1164.6Q68.4,1167.4 65.8,1166.4L54.6,1160.6H38Q36,1160.6 36,1158.6V1152.6Q36,1150.6 38,1150.6Z"/><path d="M40.6,1150.6V1160.6"/><path d="M43.9,1160.6V1168.4Q43.9,1170.2 45.7,1170.2H47.5Q49.3,1170.2 49.3,1168.4V1160.6"/></g><g fill="none" stroke="#e4e6eb" stroke-width="2.9" stroke-linecap="round" stroke-linejoin="round"><ellipse cx="45.7" cy="1235.4" rx="5.3" ry="6.1"/><circle cx="61.4" cy="1237.7" r="4.2"/><path d="M36,1260.1Q33.8,1260.1 33.8,1257.6Q34.3,1247.5 45.7,1247.5Q56.2,1247.5 56.6,1257.6Q56.6,1260.1 54.4,1260.1Z"/><path d="M58.5,1247.9Q69.8,1247 70.4,1253.6Q70.4,1255.4 68.8,1255.4H58.6"/></g><g fill="none" stroke="#e4e6eb" stroke-width="2.9" stroke-linecap="round" stroke-linejoin="round"><rect x="34.5" y="1401.5" width="35.1" height="35.1" rx="6.5"/><path d="M34.5,1416H69.6"/><path d="M45.4,1408.3H58.8"/></g><polygon points="52.05,1419.40 53.75,1424.05 58.71,1424.24 54.81,1427.30 56.16,1432.06 52.05,1429.30 47.94,1432.06 49.29,1427.30 45.39,1424.24 50.35,1424.05" fill="#e4e6eb" stroke="#e4e6eb" stroke-width="0.8" stroke-linejoin="round"/><g fill="none" stroke="#e4e6eb" stroke-width="2.9" stroke-linecap="round" stroke-linejoin="round"><g transform="translate(52,1506.9) rotate(-44)"><path d="M-15.2,-9.7H15.2Q16.9,-9.7 16.9,-8V-3.6A3.6,3.6 0 0 0 16.9,3.6V8Q16.9,9.7 15.2,9.7H-15.2Q-16.9,9.7 -16.9,8V3.6A3.6,3.6 0 0 0 -16.9,-3.6V-8Q-16.9,-9.7 -15.2,-9.7Z"/><path d="M7.4,-5.7V5.7" stroke-width="2.7"/></g></g><g fill="none" stroke="#e4e6eb" stroke-width="2.9" stroke-linecap="round" stroke-linejoin="round"><path d="M52,1577.6Q59.5,1577.6 66.6,1580.4V1596Q66.6,1604.5 52,1612.2Q37.4,1604.5 37.4,1596V1580.4Q44.5,1577.6 52,1577.6Z"/></g><circle cx="52" cy="1590" r="4.3" fill="#e4e6eb"/><path d="M50.2,1592.5H53.8L56,1599.8H48Z" fill="#e4e6eb"/><g fill="none" stroke="#e4e6eb" stroke-width="2.9" stroke-linecap="round" stroke-linejoin="round"><rect x="34.5" y="1664.8" width="30" height="30" rx="6.5"/></g><path d="M664,652.2L672.2,644.6L680.4,652.2" fill="none" stroke="#e4e6eb" stroke-width="3.6" stroke-linecap="round" stroke-linejoin="round"/><path d="M664,1090.6L672.2,1083.0L680.4,1090.6" fill="none" stroke="#e4e6eb" stroke-width="3.6" stroke-linecap="round" stroke-linejoin="round"/><path d="M664,1352.1L672.2,1344.5L680.4,1352.1" fill="none" stroke="#e4e6eb" stroke-width="3.6" stroke-linecap="round" stroke-linejoin="round"/><g transform="translate(758,632)"><circle cx="29.93" cy="29.93" r="20" fill="#65676b"/><polygon points="35.54,13.84 35.35,15.71 32.73,18.71 31.80,20.95 32.10,23.94 29.55,24.62 26.19,23.12 23.38,23.94 22.37,25.81 23.94,27.31 27.68,27.87 28.51,29.55 31.80,30.75 35.54,30.04 37.41,31.43 41.15,33.67 41.83,35.91 40.40,40.40 37.79,44.15 34.49,45.94 33.67,43.40 31.80,41.15 27.68,39.66 25.07,37.04 23.94,31.80 21.70,29.55 17.96,28.43 15.71,26.19 15.08,23.19 16.84,19.45 20.58,16.09 26.19,13.92 31.80,13.21" fill="#242526" stroke="#242526" stroke-width="0.6" stroke-linejoin="round"/></g><g transform="translate(758,720)" fill="#65676b"><circle cx="29.9" cy="21.5" r="5.05"/><circle cx="18" cy="24.6" r="4.0"/><circle cx="41.9" cy="24.6" r="4.0"/><path d="M22.7,44Q18.9,44 18.9,39.6Q18.9,29.9 29.95,29.9Q41,29.9 41,39.6Q41,44 37.2,44Z"/><path d="M18,31Q10.2,31.6 9.9,38Q9.9,42 13.6,42H16.1Q15.4,36 18,31Z"/><path d="M41.9,31Q49.7,31.6 50,38Q50,42 46.3,42H43.8Q44.5,36 41.9,31Z"/></g><g transform="translate(758,808)" fill="#65676b"><rect x="10" y="24.9" width="10" height="24.1" rx="1.8"/><path d="M23,29.2Q23,27.9 24.2,27.3Q27.5,24.5 28.9,17.5V12.6Q28.9,10 31.8,10Q36,10.5 37,16.1Q37.3,19.5 36,22.8H45.6Q48.9,23.2 48.9,26.3Q48.9,27.6 48.2,28.6Q50,30 50,32.3Q49.9,34.4 48.5,35.6Q49.6,37.3 49.2,39Q48.6,41 46.5,41.8Q46.8,43.6 45.7,45.1Q44.3,46.8 41.5,46.8H29Q25,46.6 23,43.2Z"/></g><g transform="translate(758,896)"><path d="M20.2,9.9H39.7Q43.8,9.9 45.3,14L49.5,25Q50,26.6 50,28.5V44Q50,50.1 44,50.1H16Q10,50.1 10,44V28.5Q10,26.6 10.5,25L14.7,14Q16.2,9.9 20.2,9.9Z" fill="#65676b"/><path d="M19.1,15Q20.2,13.1 21.6,13.1H38.4Q39.8,13.1 40.9,15Z" fill="#242526"/><path d="M16.5,20Q17.7,18.1 19.2,18.1H40.8Q42.3,18.1 43.4,20Z" fill="#242526"/><path d="M22.1,35.2L26.9,40L37.4,28.8" fill="none" stroke="#242526" stroke-width="3.9" stroke-linecap="round" stroke-linejoin="round"/></g><g transform="translate(758,1108)"><circle cx="29.93" cy="29.93" r="19.1" fill="#65676b"/><circle cx="22.4" cy="26.5" r="2.45" fill="#242526"/><circle cx="37.5" cy="26.5" r="2.45" fill="#242526"/><path d="M21.2,34.1Q29.93,40.9 38.8,34.1" fill="none" stroke="#242526" stroke-width="2.7" stroke-linecap="round"/></g><g transform="translate(758,1196)" fill="#65676b"><rect x="11" y="12" width="38.1" height="29.9" rx="8"/><path d="M19.8,40.5L20.3,48.6Q20.5,50.6 22.2,49.5L32.5,41.5Z"/></g><g transform="translate(758,1284)" fill="#65676b"><path d="M29.9,20.6V13Q29.9,10.4 32.2,11.5L49.5,28.4Q50.3,29.4 49.5,30.4L32.4,46.8Q29.9,48.4 29.9,45.4V38.2Q19,37.6 13.9,48Q12.6,50 11.1,48.8Q10.3,48 10.5,46Q12,23 29.9,20.6Z"/></g><g transform="translate(758,1372)"><path d="M18.7,12.2Q13,12.4 11,14Q9.8,15.5 10.2,18.5L12.5,43.5Q13,47.6 18,48.1Q16,46 16.3,42Z" fill="#65676b"/><path d="M25.6,12.5L46.6,14.7Q50.2,15.2 49.9,18.8L47.9,45.8Q47.5,49.5 43.9,49.2L22.5,47.2Q18.9,46.8 19.2,43.2L21.7,15.8Q22.1,12.2 25.6,12.5Z" fill="#65676b"/><path d="M25.4,15.2L46.8,17.4L45.6,29.9L41.2,25.8L33.9,31.8L35.9,34.8L34.4,35.9L28.1,30.3L23.2,33.7Z" fill="#242526" stroke="#242526" stroke-width="0.5" stroke-linejoin="round"/><circle cx="29.9" cy="21.1" r="3.2" fill="#65676b"/></g><g transform="translate(758,1460)" fill="#65676b"><path d="M18.9,15.5Q18.9,12 22,13.3L43,34Q45,37.5 41,37.8L35.4,38L38,44Q38.5,45.5 37,46.2L32.5,48.2Q31,48.8 30.3,47.3L26.6,41.5L22.5,46.3Q19,48.5 18.9,45Z"/></g><g fill="none" stroke="#fff" stroke-linejoin="round"><path d="M2266.3,426.4H2254.55Q2249.55,426.4 2249.55,431.4V448.7Q2249.55,453.7 2254.55,453.7H2271.7Q2276.7,453.7 2276.7,448.7V436.6" stroke-width="3.2"/></g><path d="M2256.4,442.4L2269.3,429.3L2273.8,433.5L2260.3,446.8H2257.2Q2256,446.6 2256,445.4Z" fill="#fff" stroke="#fff" stroke-width="0.6" stroke-linejoin="round"/><path d="M2272.1,426.9L2275.4,424.1L2279,427.5L2275.9,430.9Z" fill="#fff" stroke="#fff" stroke-width="0.5" stroke-linejoin="round"/></svg>
<div class="b" style="left:32px;top:229px;width:80px;height:80px;border-radius:50%;overflow:hidden;background:linear-gradient(#54acfd,#2759da);"><div class="t" style="left:22.9px;top:0.6px;font-size:120px;line-height:120px;font-weight:700;color:#fff;transform:scaleX(0.9);transform-origin:0 0;">f</div></div>
<div class="b" style="left:819px;top:165px;width:32px;height:32px;border-radius:50%;overflow:hidden;background:linear-gradient(#54acfd,#2759da);"><div class="t" style="left:8.9px;top:0.2px;font-size:48px;line-height:48px;font-weight:700;color:#fff;transform:scaleX(0.9);transform-origin:0 0;">f</div></div>
<div class="t" style="left:1866.5px;top:166.2px;width:30px;text-align:center;font-size:24.5px;line-height:24.5px;font-weight:700;color:#000;letter-spacing:-2.3px;">JM</div><div class="t" style="left:1867.5px;top:188.2px;width:32px;text-align:center;font-size:3.2px;line-height:4px;font-weight:700;color:#333;letter-spacing:0.9px;">PROFILE</div>
<div class="b" style="left:2376px;top:221px;width:6px;height:1251px;background:rgba(255,255,255,0.5);border-radius:3px;"></div>
<div class="b" style="left:28px;top:1656px;width:1846px;height:6.5px;background:rgba(255,255,255,0.54);border-radius:3.25px;"></div>
<div class="b" style="left:879px;top:1642px;width:630px;height:11px;background:#fff;border-radius:5.5px;"></div>
</div></body></html>
